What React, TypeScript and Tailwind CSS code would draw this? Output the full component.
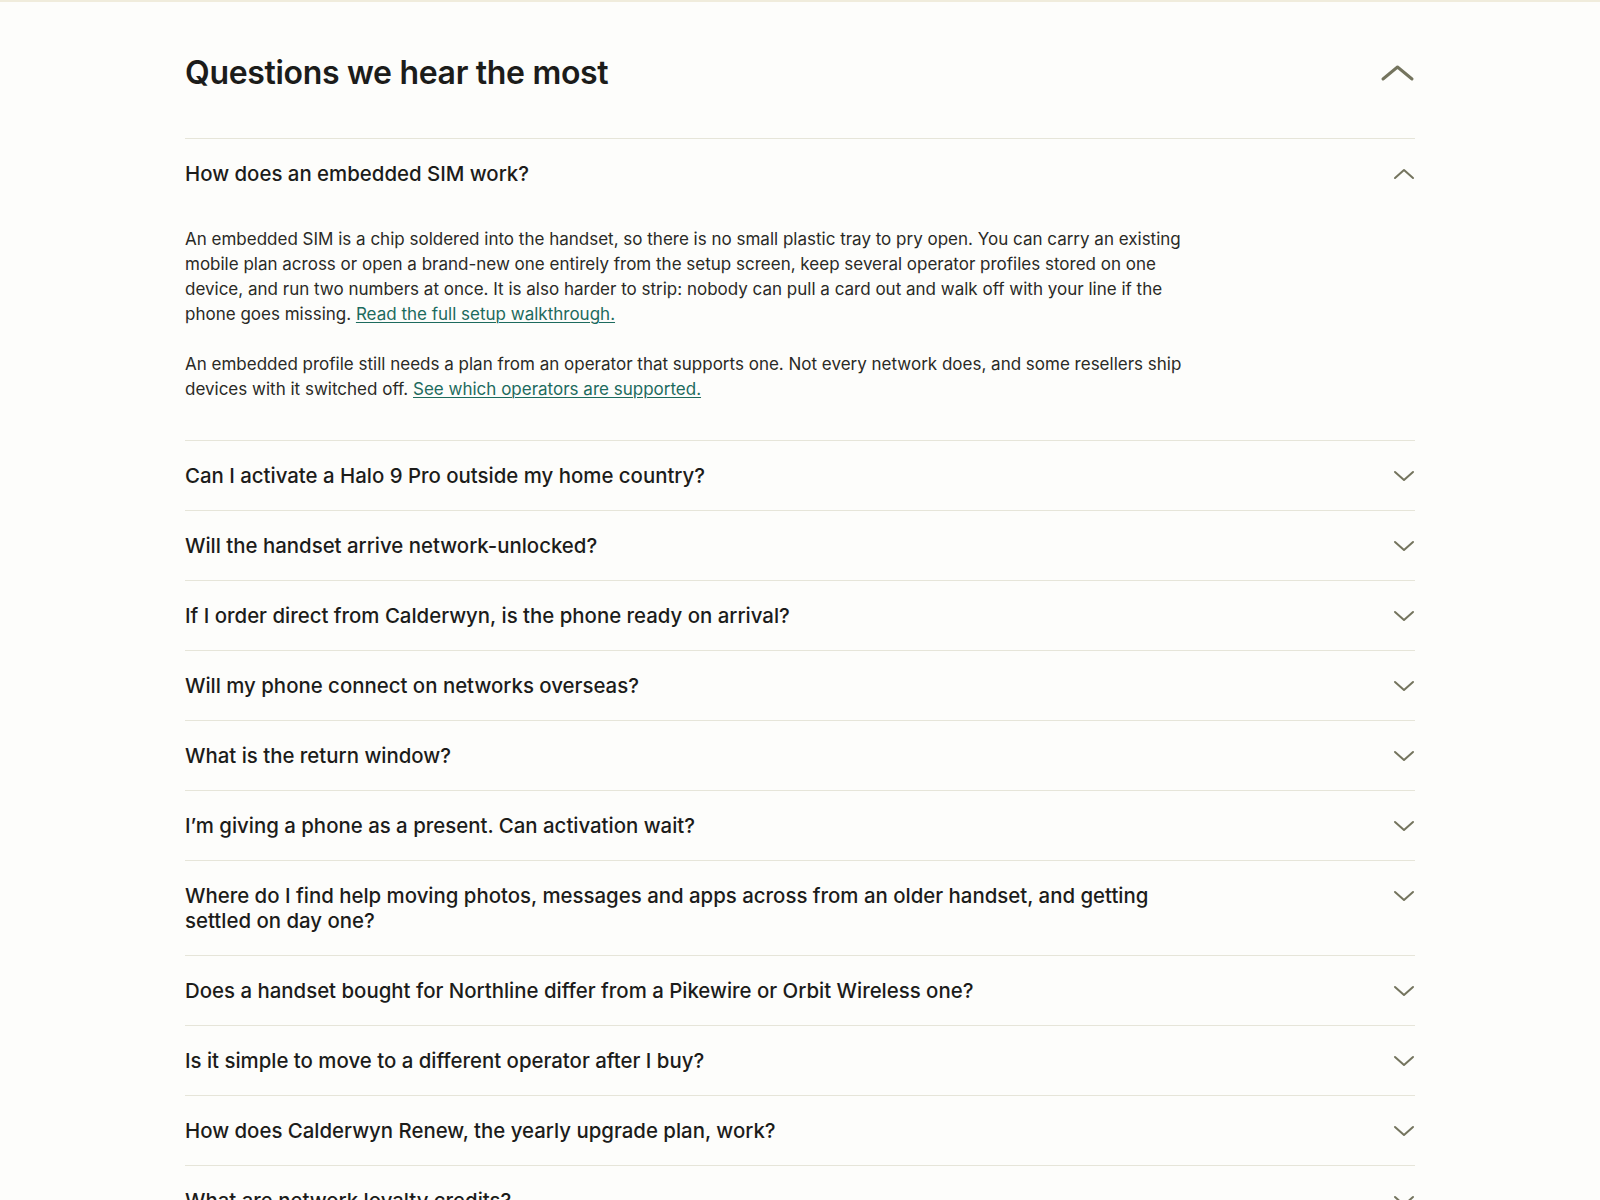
import { useState } from "react";

const questions = [
  "How does an embedded SIM work?",
  "Can I activate a Halo 9 Pro outside my home country?",
  "Will the handset arrive network-unlocked?",
  "If I order direct from Calderwyn, is the phone ready on arrival?",
  "Will my phone connect on networks overseas?",
  "What is the return window?",
  "I’m giving a phone as a present. Can activation wait?",
  "Where do I find help moving photos, messages and apps across from an older handset, and getting settled on day one?",
  "Does a handset bought for Northline differ from a Pikewire or Orbit Wireless one?",
  "Is it simple to move to a different operator after I buy?",
  "How does Calderwyn Renew, the yearly upgrade plan, work?",
  "What are network loyalty credits?",
];

function Chevron({ up, big }: { up?: boolean; big?: boolean }) {
  const w = big ? 35 : 22;
  const h = big ? 18 : 12;
  const sw = big ? 3 : 2;
  return (
    <svg width={w} height={h} viewBox={`0 0 ${w} ${h}`} fill="none" className="shrink-0">
      <path
        d={up ? `M${sw} ${h - sw} L${w / 2} ${sw} L${w - sw} ${h - sw}` : `M${sw} ${sw} L${w / 2} ${h - sw} L${w - sw} ${sw}`}
        stroke="#74745e"
        strokeWidth={sw}
        strokeLinecap="round"
        strokeLinejoin="round"
      />
    </svg>
  );
}

function Answer() {
  return (
    <div className="max-w-[1000px] pt-[19px] pb-[38px] text-[17px] leading-[25px] text-[#2a2a26] flex flex-col gap-[25px]">
      <p>
        An embedded SIM is a chip soldered into the handset, so there is no small plastic tray to pry open. You can carry an existing mobile plan across or open a brand-new one entirely from the setup screen, keep several operator profiles stored on one device, and run two numbers at once. It is also harder to strip: nobody can pull a card out and walk off with your line if the phone goes missing.{" "}
        <a href="#" className="text-[#1d6b5e] underline underline-offset-2 decoration-1">Read the full setup walkthrough.</a>
      </p>
      <p>
        An embedded profile still needs a plan from an operator that supports one. Not every network does, and some resellers ship devices with it switched off.{" "}
        <a href="#" className="text-[#1d6b5e] underline underline-offset-2 decoration-1">See which operators are supported.</a>
      </p>
    </div>
  );
}

export default function App() {
  const [open, setOpen] = useState<number>(0);
  return (
    <div className="min-h-screen bg-[#fdfdfb] border-t-2 border-[#f0ecdc]" style={{ fontFamily: "Inter, 'Noto Sans', sans-serif" }}>
      <div className="w-[1230px] mx-auto pt-[51px]">
        <div className="flex items-center justify-between pb-[45px]">
          <h2 className="text-[32px] leading-[40px] font-semibold tracking-[-0.01em] text-[#1c1c1a]">Questions we hear the most</h2>
          <Chevron up big />
        </div>
        {questions.map((q, i) => (
          <div key={q} className="border-t border-[#e6e5d9]">
            <button
              onClick={() => setOpen(open === i ? -1 : i)}
              className="w-full flex items-start justify-between py-[22px] text-left cursor-pointer"
            >
              <span className="max-w-[1000px] text-[20.4px] leading-[25px] font-medium text-[#1c1c1a]">{q}</span>
              <span className="mt-[7px]">
                <Chevron up={open === i} />
              </span>
            </button>
            {open === i && i === 0 && <Answer />}
          </div>
        ))}
      </div>
    </div>
  );
}
